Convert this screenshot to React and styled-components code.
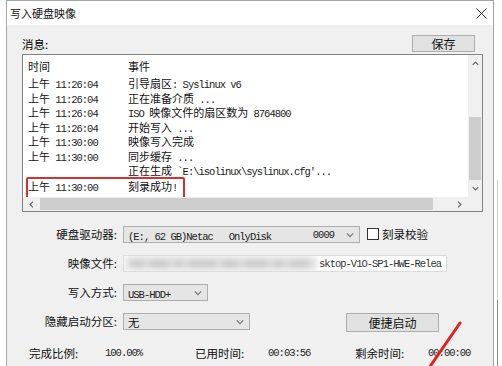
import React from 'react'
import styled, { createGlobalStyle } from 'styled-components'

const GlobalStyle = createGlobalStyle`
  html, body {
    margin: 0;
    padding: 0;
    background: #fff;
  }
  body {
    width: 502px;
    height: 366px;
    overflow: hidden;
    font-family: "Noto Sans CJK SC", sans-serif;
    font-size: 12px;
    color: #000;
  }
  * {
    box-sizing: border-box;
  }
`

const cjk = `"Noto Sans CJK SC", "Noto Sans CJK TC", sans-serif`

const logRows = [
  ['上午 11:26:04', '引导扇区: Syslinux v6'],
  ['上午 11:26:04', '正在准备介质 ...'],
  ['上午 11:26:04', 'ISO 映像文件的扇区数为 8764800'],
  ['上午 11:26:04', '开始写入 ...'],
  ['上午 11:30:00', '映像写入完成'],
  ['上午 11:30:00', '同步缓存 ...'],
  ['', "正在生成 `E:\\isolinux\\syslinux.cfg'..."],
  ['上午 11:30:00', '刻录成功!', true],
]

// widths of the smudged path pieces in the blurred file field
const smudges = [14, 22, 9, 30, 18, 26, 12, 20, 16]

const Page = styled.div`
  display: flex;
  height: 366px;
  padding-left: 6px;
`

const Window = styled.div`
  position: relative;
  display: flex;
  flex-direction: column;
  width: 488px;
  height: 366px;
  border: 1px solid #a5a5a5;
  border-bottom: none;
  background: #f0f0f0;
`

const TitleBar = styled.div`
  display: flex;
  align-items: center;
  justify-content: space-between;
  height: 24px;
  padding: 0 6px 0 3px;
  background: #fff;
  font-size: 11px;
  color: #111;
`

const Body = styled.div`
  display: flex;
  flex-direction: column;
  padding: 10px 10px 0 15px;
`

const HeaderRow = styled.div`
  display: flex;
  align-items: center;
  justify-content: space-between;
  height: 17px;
  font-size: 11.5px;
`

const Button = styled.div`
  display: flex;
  align-items: center;
  justify-content: center;
  width: ${({ $w }) => $w}px;
  height: ${({ $h }) => $h || 17}px;
  margin-right: ${({ $mr }) => $mr || 0}px;
  margin-left: ${({ $ml }) => $ml || 0}px;
  border: 1px solid #adadad;
  background: #e1e1e1;
  font-size: 12px;
  color: #111;
`

const ListBox = styled.div`
  display: grid;
  grid-template-columns: 1fr 14px;
  grid-template-rows: 1fr 14px;
  height: 158px;
  margin-top: 2px;
  border: 1px solid #828282;
  background: #fff;
`

const ListContent = styled.div`
  position: relative;
  padding: 4px 0 0 5px;
  overflow: hidden;
  white-space: nowrap;
  font-size: 11px;
  color: #111;
`

const ListHead = styled.div`
  display: flex;
  height: 14px;
  line-height: 14px;
  margin-bottom: 3px;
`

const LogRow = styled.div`
  position: relative;
  display: flex;
  height: 14.5px;
  line-height: 14.5px;
  margin-top: ${({ $mark }) => ($mark ? 1.5 : 0)}px;

  ${({ $mark }) =>
    $mark &&
    `
    &::after {
      content: '';
      position: absolute;
      left: -2px;
      top: -2px;
      width: 155px;
      height: 20px;
      border: 2px solid #d8312c;
      border-radius: 2px;
    }
  `}
`

const TimeCell = styled.div`
  width: 100px;
  flex: none;
`

const EventCell = styled.div`
  flex: 1;
`

const Mono = styled.span`
  font-family: "Liberation Mono", "DejaVu Sans Mono", monospace;
  font-size: 10.5px;
  letter-spacing: -1px;
  white-space: pre;
  color: #222;
`

const VScroll = styled.div`
  display: flex;
  flex-direction: column;
  background: #f0f0f0;
`

const HScroll = styled.div`
  display: flex;
  background: #f0f0f0;
`

const Corner = styled.div`
  background: #f0f0f0;
`

const ArrowBtn = styled.div`
  display: flex;
  align-items: center;
  justify-content: center;
  flex: none;
  width: ${({ $w }) => $w}px;
  height: ${({ $h }) => $h}px;
`

const Track = styled.div`
  flex: 1;
  display: flex;
  flex-direction: ${({ $dir }) => $dir};
`

const Thumb = styled.div`
  flex: none;
  background: #cdcdcd;
  width: ${({ $w }) => ($w ? `${$w}px` : 'auto')};
  height: ${({ $h }) => ($h ? `${$h}px` : 'auto')};
  margin: ${({ $m }) => $m};
`

const ChevronSvg = styled.svg`
  display: block;
  transform: rotate(${({ $rot }) => $rot}deg);
`

const Chevron = ({ dir = 'down', color = '#606060', size = 7 }) => {
  const rot = { up: 0, right: 90, down: 180, left: 270 }[dir]
  return (
    <ChevronSvg $rot={rot} width={size} height={size} viewBox="0 0 8 8">
      <polyline points="0.8,5.6 4,2.4 7.2,5.6" fill="none" stroke={color} strokeWidth="1.3" />
    </ChevronSvg>
  )
}

const Form = styled.div`
  display: grid;
  grid-template-columns: 95px 1fr;
  column-gap: 6px;
  row-gap: 12px;
  margin-top: 14px;
`

const Label = styled.div`
  height: 17px;
  line-height: 17px;
  text-align: right;
  font-size: 11.5px;
  color: #111;
`

const Controls = styled.div`
  display: flex;
  align-items: flex-start;
`

const Select = styled.div`
  display: flex;
  align-items: center;
  width: ${({ $w }) => $w}px;
  height: 17px;
  padding: 0 5px 0 4px;
  border: 1px solid #adadad;
  background: #e5e5e5;
  color: #111;
  font-size: 11.5px;
`

const SelectText = styled.div`
  flex: 1;
  white-space: pre;
  overflow: hidden;
`

const Gap = styled.span`
  width: ${({ $w }) => $w}px;
  flex: none;
`

const CheckBox = styled.div`
  width: 12px;
  height: 12px;
  margin: 2px 3px 0 7px;
  border: 1px solid #333;
  background: #fff;
`

const CheckLabel = styled.div`
  line-height: 16px;
  font-size: 11.5px;
  color: #111;
`

const FileField = styled.div`
  display: flex;
  align-items: center;
  width: 324px;
  height: 17px;
  border: 1px solid #dcdcdc;
  background: #fff;
  overflow: hidden;
`

const Blurred = styled.div`
  flex: 1;
  display: flex;
  align-items: center;
  gap: 4px;
  height: 100%;
  padding-left: 6px;
  overflow: hidden;
  background: #e6e6e6;
  filter: blur(3px);
`

const Smudge = styled.span`
  flex: none;
  width: ${({ $w }) => $w}px;
  height: 7px;
  background: #c6c6c6;
`

const FileText = styled(Mono)`
  padding: 0 5px 0 3px;
  color: #333;
`

const Stats = styled.div`
  display: grid;
  grid-template-columns: 76px 90px 73px 87px 73px auto;
  align-items: center;
  height: 14px;
  margin-top: 13px;
  padding-left: 7px;
  font-size: 11.5px;
  color: #111;
`

const Overlay = styled.svg`
  position: absolute;
  left: -7px;
  top: -1px;
  pointer-events: none;
`

const Edge = styled.div`
  display: flex;
  width: 8px;
  padding-left: 3px;
`

const EdgeLine = styled.div`
  width: 1px;
  margin-top: 180px;
  background: linear-gradient(to bottom, #d0d0d0 0, #d0d0d0 120px, #8a8a8a 120px, #8a8a8a 186px);
`

const Mixed = ({ text }) =>
  text
    .split(/([\x20-\x7e]+)/)
    .filter(Boolean)
    .map((part, i) =>
      /^[\x20-\x7e]+$/.test(part) ? <Mono key={i}>{part}</Mono> : <span key={i}>{part}</span>
    )

const CloseIcon = () => (
  <svg width="11" height="11" viewBox="0 0 11 11">
    <path d="M0.5 0.5 L10.5 10.5 M10.5 0.5 L0.5 10.5" stroke="#222" strokeWidth="1" />
  </svg>
)

const App = () => {
  return (
    <>
      <GlobalStyle />
      <Page>
        <Window>
          <TitleBar>
            <span>写入硬盘映像</span>
            <CloseIcon />
          </TitleBar>

          <Body>
            <HeaderRow>
              <span>消息:</span>
              <Button $w={63} $mr={8}>保存</Button>
            </HeaderRow>

            <ListBox>
              <ListContent>
                <ListHead>
                  <TimeCell>时间</TimeCell>
                  <EventCell>事件</EventCell>
                </ListHead>
                {logRows.map(([time, event, mark], i) => (
                  <LogRow key={i} $mark={mark}>
                    <TimeCell>
                      <Mixed text={time} />
                    </TimeCell>
                    <EventCell>
                      <Mixed text={event} />
                    </EventCell>
                  </LogRow>
                ))}
              </ListContent>
              <VScroll>
                <ArrowBtn $w={14} $h={17}>
                  <Chevron dir="up" />
                </ArrowBtn>
                <Track $dir="column">
                  <Thumb $h={63} $m="45px 1px 0 1px" />
                </Track>
                <ArrowBtn $w={14} $h={17}>
                  <Chevron dir="down" />
                </ArrowBtn>
              </VScroll>
              <HScroll>
                <ArrowBtn $w={17} $h={14}>
                  <Chevron dir="left" />
                </ArrowBtn>
                <Track $dir="row">
                  <Thumb $w={393} $m="1px 0" />
                </Track>
                <ArrowBtn $w={17} $h={14}>
                  <Chevron dir="right" />
                </ArrowBtn>
              </HScroll>
              <Corner />
            </ListBox>

            <Form>
              <Label>硬盘驱动器:</Label>
              <Controls>
                <Select $w={237}>
                  <SelectText>
                    <Mono>{'(E:, 62 GB)Netac   OnlyDisk'}</Mono>
                  </SelectText>
                  <Mono>0009</Mono>
                  <Gap $w={12} />
                  <Chevron dir="down" color="#777" size={8} />
                </Select>
                <CheckBox />
                <CheckLabel>刻录校验</CheckLabel>
              </Controls>

              <Label>映像文件:</Label>
              <Controls>
                <FileField>
                  <Blurred>
                    {smudges.map((w, i) => (
                      <Smudge key={i} $w={w} />
                    ))}
                  </Blurred>
                  <FileText>sktop-V1O-SP1-HWE-Relea</FileText>
                </FileField>
              </Controls>

              <Label>写入方式:</Label>
              <Controls>
                <Select $w={85}>
                  <SelectText>
                    <Mono>USB-HDD+</Mono>
                  </SelectText>
                  <Chevron dir="down" color="#777" size={8} />
                </Select>
              </Controls>

              <Label>隐藏启动分区:</Label>
              <Controls>
                <Select $w={127}>
                  <SelectText style={{ fontFamily: cjk }}>无</SelectText>
                  <Chevron dir="down" color="#777" size={8} />
                </Select>
                <Button $w={93} $h={19} $ml={96}>便捷启动</Button>
              </Controls>
            </Form>

            <Stats>
              <span>完成比例:</span>
              <Mono>100.00%</Mono>
              <span>已用时间:</span>
              <Mono>00:03:56</Mono>
              <span>剩余时间:</span>
              <Mono>00:00:00</Mono>
            </Stats>
          </Body>

          <Overlay width="502" height="366" viewBox="0 0 502 366">
            <line x1="460" y1="323" x2="429" y2="368" stroke="#e0231d" strokeWidth="3" strokeLinecap="round" />
          </Overlay>
        </Window>
        <Edge>
          <EdgeLine />
        </Edge>
      </Page>
    </>
  )
}

export default App
